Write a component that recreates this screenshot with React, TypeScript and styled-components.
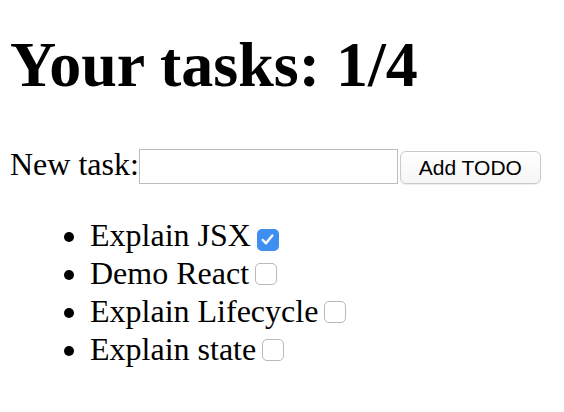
import React from "react";
import styled, { createGlobalStyle } from "styled-components";

const GlobalStyle = createGlobalStyle`
  html, body {
    margin: 0;
    padding: 0;
    background: #ffffff;
  }
  body {
    font-family: "Liberation Serif", "Times New Roman", serif;
    color: #000;
  }
`;

const Page = styled.div`
  padding: 29px 10px 0;
`;

const Title = styled.h1`
  margin: 0;
  font-size: 64px;
  line-height: 72px;
  font-weight: 700;
`;

const Form = styled.div`
  display: flex;
  align-items: flex-start;
  margin-top: 45px;
  height: 37px;
`;

const Label = styled.span`
  font-size: 32px;
  line-height: 37px;
`;

const TextInput = styled.input`
  box-sizing: border-box;
  margin: 3px 0 0;
  width: 259px;
  height: 35px;
  border: 1px solid #bdbdbd;
  padding: 2px 4px;
  font-size: 22px;
  outline: none;
  background: #fff;
`;

const Button = styled.button`
  box-sizing: border-box;
  margin: 5px 0 0 2px;
  width: 141px;
  height: 33px;
  border: 1px solid #c9c9c9;
  border-radius: 6px;
  background: linear-gradient(#ffffff, #f6f6f6);
  box-shadow: 0 1px 1px rgba(0, 0, 0, 0.08);
  font-family: "Liberation Sans", Arial, sans-serif;
  font-size: 21px;
  color: #000;
  padding: 0;
`;

const List = styled.ul`
  margin: 33px 0 0;
  padding-left: 80px;
  list-style: disc;
`;

const Item = styled.li`
  font-size: 32px;
  line-height: 38px;
`;

const Box = styled.span<{ $checked: boolean }>`
  display: inline-flex;
  align-items: center;
  justify-content: center;
  box-sizing: border-box;
  width: 22px;
  height: 22px;
  margin-left: 6px;
  vertical-align: -1px;
  border-radius: 5px;
  border: ${(p) => (p.$checked ? "none" : "1.5px solid #b8b8b8")};
  background: ${(p) => (p.$checked ? "#3f8ff0" : "#ffffff")};
`;

const tasks = [
  { name: "Explain JSX", done: true },
  { name: "Demo React", done: false },
  { name: "Explain Lifecycle", done: false },
  { name: "Explain state", done: false },
];

function Check({ checked }: { checked: boolean }) {
  return (
    <Box $checked={checked} role="checkbox" aria-checked={checked}>
      {checked && (
        <svg width="15" height="15" viewBox="0 0 14 14">
          <path
            d="M2.5 7.5 L5.6 10.6 L11.5 3.2"
            fill="none"
            stroke="#ffffff"
            strokeWidth="2.2"
            strokeLinecap="round"
            strokeLinejoin="round"
          />
        </svg>
      )}
    </Box>
  );
}

export default function App() {
  const done = tasks.filter((t) => t.done).length;
  return (
    <Page>
      <GlobalStyle />
      <Title>
        Your tasks: {done}/{tasks.length}
      </Title>
      <Form>
        <Label>New task:</Label>
        <TextInput type="text" />
        <Button type="button">Add TODO</Button>
      </Form>
      <List>
        {tasks.map((t) => (
          <Item key={t.name}>
            {t.name}
            <Check checked={t.done} />
          </Item>
        ))}
      </List>
    </Page>
  );
}
